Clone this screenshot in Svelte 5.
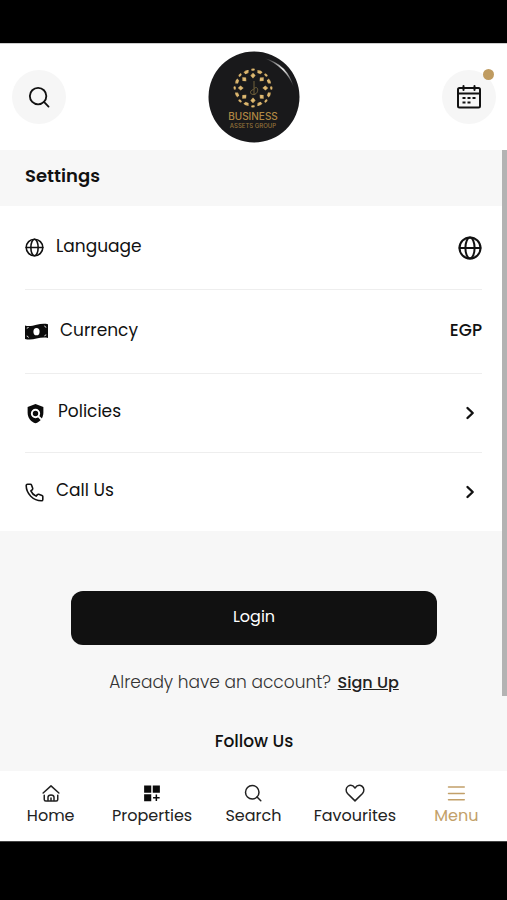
<script lang="ts">
	type Tab = { id: string; label: string };

	const tabs: Tab[] = [
		{ id: 'home', label: 'Home' },
		{ id: 'properties', label: 'Properties' },
		{ id: 'search', label: 'Search' },
		{ id: 'favourites', label: 'Favourites' },
		{ id: 'menu', label: 'Menu' }
	];

	const ring = Array.from({ length: 8 }, (_, i) => i * 45);

	let active = $state('menu');
</script>

{#snippet globe()}
	<svg class="icon" viewBox="0 0 24 24" aria-hidden="true">
		<circle cx="12" cy="12" r="10.5" />
		<ellipse cx="12" cy="12" rx="4.6" ry="10.5" />
		<path d="M1.5 12h21" />
	</svg>
{/snippet}

{#snippet magnifier()}
	<svg class="icon" viewBox="0 0 24 24" aria-hidden="true">
		<circle cx="11" cy="11" r="9" />
		<path d="M17.4 17.4L22.4 22.4" />
	</svg>
{/snippet}

{#snippet chevron()}
	<svg class="icon chevron" viewBox="0 0 24 24" aria-hidden="true">
		<path d="M9.5 7l5.2 5-5.2 5" />
	</svg>
{/snippet}

<div class="screen">
	<header class="top">
		<button class="round" type="button" aria-label="Search">
			{@render magnifier()}
		</button>

		<a class="brand" href="#home" aria-label="Business Assets Group">
			<svg viewBox="0 0 92 92" aria-hidden="true">
				<defs>
					<linearGradient id="gold" x1="0" y1="0" x2="1" y2="1">
						<stop offset="0" stop-color="#a37b3a" />
						<stop offset="0.5" stop-color="#e3c07a" />
						<stop offset="1" stop-color="#b0863f" />
					</linearGradient>
					<linearGradient id="shine" x1="0" y1="0" x2="1" y2="1">
						<stop offset="0" stop-color="#fff" stop-opacity="0" />
						<stop offset="0.5" stop-color="#fff" stop-opacity="0.9" />
						<stop offset="1" stop-color="#fff" stop-opacity="0" />
					</linearGradient>
				</defs>
				<circle cx="46" cy="46" r="45.5" fill="#19191b" />
				<path d="M56 7Q80 13 86 37Q78 16 56 7z" fill="url(#shine)" />
				<g fill="url(#gold)">
					{#each ring as angle}
						<g transform="rotate({angle} 45 37)">
							<rect x="43.2" y="17.6" width="3.6" height="2.2" rx="1" />
							<path d="M45 21.8l2.6 2.8-2.6 3-2.6-3z" />
						</g>
						<g transform="rotate({angle + 22.5} 45 37)">
							<path d="M42.2 18.8q2.8-1.4 5.6 0l-1.2 2.6h-3.2z" />
						</g>
					{/each}
				</g>
				<path
					d="M46 30v14M46 37.500c5-4 5 6-.5 6-4 0-4-4 0-5"
					fill="none"
					stroke="#7c6a40"
					stroke-width="0.9"
				/>
				<text class="brand-name" x="45" y="69" text-anchor="middle">BUSINESS</text>
				<text class="brand-sub" x="45" y="77" text-anchor="middle">ASSETS GROUP</text>
			</svg>
		</a>

		<button class="round calendar" type="button" aria-label="Bookings">
			<svg class="icon" viewBox="0 0 24 24" aria-hidden="true">
				<rect x="1" y="3" width="22" height="19.5" rx="1.5" />
				<path d="M1 8.5h22M6.5 1v4M17.5 1v4" />
				<path class="days" d="M5.500 13h3M10.500 13h3M15.500 13h3M5.500 17.500h3M10.500 17.500h3" />
			</svg>
			<span class="dot"></span>
		</button>
	</header>

	<main>
		<h1>Settings</h1>

		<ul class="rows">
			<li>
				<button class="row tall" type="button">
					<span class="glyph">{@render globe()}</span>
					<span class="label">Language</span>
					<span class="trail world">{@render globe()}</span>
				</button>
			</li>
			<li>
				<button class="row tall" type="button">
					<span class="glyph cash">
						<svg viewBox="0 0 24 18" aria-hidden="true">
							<path
								fill="#0b0b0b"
								d="M0 2.6C4 3.8 8 2.8 12 1.8 16 .8 20 .2 24 1.2V15.6C20 14.8 16 15.4 12 16.2 8 17.2 4 17.8 0 16.6z"
							/>
							<ellipse cx="12" cy="9" rx="3.2" ry="3.8" fill="#fff" />
							<path
								d="M1.8 5.4q1.6 .1 1.8-1.2M20.4 2.8q.2 1.5 1.8 1.7M1.8 13.6q1.6 .2 1.8 1.6M20.4 13.8q.2-1.4 1.8-1.4"
								fill="none"
								stroke="#fff"
								stroke-width="0.9"
							/>
						</svg>
					</span>
					<span class="label">Currency</span>
					<span class="trail code">EGP</span>
				</button>
			</li>
			<li>
				<a class="row" href="#policies">
					<span class="glyph shield">
						<svg viewBox="0 0 24 24" aria-hidden="true">
							<path fill="#0b0b0b" d="M12 1L21 4.6V11c0 5.6-3.8 10.6-9 12-5.2-1.4-9-6.4-9-12V4.6z" />
							<circle cx="12" cy="12" r="4.2" fill="none" stroke="#fff" stroke-width="2.2" />
							<path d="M15 15l5 5" stroke="#fff" stroke-width="2.2" />
						</svg>
					</span>
					<span class="label">Policies</span>
					<span class="trail">{@render chevron()}</span>
				</a>
			</li>
			<li>
				<a class="row" href="#call">
					<span class="glyph">
						<svg class="icon" viewBox="0 0 24 24" aria-hidden="true">
							<path
								d="M3.3 1.5h3.5c.7 0 1.2.4 1.4 1l1.5 4.2c.2.6 0 1.2-.4 1.6L7.4 10c1.2 2.9 3.6 5.3 6.6 6.6l1.7-1.9c.4-.4 1-.6 1.6-.4l4.200 1.500c.6.2 1 .8 1 1.400v3.500c0 1-.8 1.800-1.800 1.800C10.500 22.500 1.500 13.500 1.500 3.300c0-1 .8-1.800 1.800-1.800z"
							/>
						</svg>
					</span>
					<span class="label">Call Us</span>
					<span class="trail">{@render chevron()}</span>
				</a>
			</li>
		</ul>

		<section class="account">
			<button class="login" type="button">Login</button>
			<p>Already have an account? <a href="#signup">Sign Up</a></p>
			<h2>Follow Us</h2>
		</section>

		<span class="thumb"></span>
	</main>

	<nav class="tabs">
		{#each tabs as tab (tab.id)}
			<a href="#{tab.id}" class:active={active === tab.id} onclick={() => (active = tab.id)}>
				{#if tab.id === 'home'}
					<svg class="icon" viewBox="0 0 24 24" aria-hidden="true">
						<path d="M1.5 12L12 2.5 22.5 12M3 15v5.5q0 2 2 2h14q2 0 2-2V15" />
						<path d="M8 22v-4.5q0-3 4-3t4 3V22M12 18.5V22" />
					</svg>
				{:else if tab.id === 'properties'}
					<svg viewBox="0 0 24 24" aria-hidden="true">
						<path
							fill="#0b0b0b"
							d="M1.5 2h9.5v9.5H1.5zM13 2h9.5v9.5H13zM1.5 13.5h9.5V23H1.5zM16.8 14h2v3.4h3.4v2h-3.4v3.4h-2v-3.4h-3.4v-2h3.4z"
						/>
					</svg>
				{:else if tab.id === 'search'}
					{@render magnifier()}
				{:else if tab.id === 'favourites'}
					<svg class="icon heart" viewBox="0 0 26 24" aria-hidden="true">
						<path
							d="M13 22.5L3 12.6C.4 9.8 .6 5 3.6 3c3.2-2.1 7-1 9.4 2.4C15.4 2 19.2 .9 22.4 3c3 2 3.2 6.8 .6 9.6z"
						/>
					</svg>
				{:else}
					<svg class="icon" viewBox="0 0 24 24" aria-hidden="true">
						<path d="M2 4h21M2 12.5h21M2 21h21" />
					</svg>
				{/if}
				<span>{tab.label}</span>
			</a>
		{/each}
	</nav>
</div>

<style>
	:global(body) {
		margin: 0;
		background: #000;
	}

	.screen {
		min-height: 100vh;
		box-sizing: border-box;
		padding: 43px 0 59px;
		display: flex;
		flex-direction: column;
		background: #000;
		color: #111;
		font-family: Poppins, Inter, 'Open Sans', sans-serif;
		font-size: 17px;
		line-height: 24px;
	}

	button {
		border: 0;
		padding: 0;
		background: none;
		color: inherit;
		font: inherit;
		cursor: pointer;
	}

	a {
		color: inherit;
		text-decoration: none;
	}

	svg {
		display: block;
		overflow: visible;
	}

	.icon {
		fill: none;
		stroke: currentColor;
		stroke-width: 2;
		stroke-linecap: round;
		stroke-linejoin: round;
	}

	.top {
		display: flex;
		align-items: center;
		justify-content: space-between;
		padding: 7px 11px 7px 12px;
		border-top: 1px solid #ccc;
		background: #fff;
	}

	.round {
		position: relative;
		display: grid;
		place-items: center;
		width: 54px;
		height: 54px;
		border-radius: 50%;
		background: #f6f6f6;
	}

	.round .icon {
		width: 22px;
		height: 22px;
	}

	.round.calendar .icon {
		width: 24px;
		height: 24px;
	}

	.icon .days {
		stroke-linecap: butt;
	}

	.dot {
		position: absolute;
		top: -1px;
		right: 2px;
		width: 11px;
		height: 11px;
		border-radius: 50%;
		background: #bf9b60;
	}

	.brand svg {
		width: 92px;
		height: 92px;
	}

	.brand-name {
		fill: #b08843;
		font-family: Inter, sans-serif;
		font-size: 10px;
		font-weight: 500;
	}

	.brand-sub {
		fill: #94723a;
		font-family: Inter, sans-serif;
		font-size: 6px;
		font-weight: 500;
	}

	main {
		position: relative;
		flex: 1;
		background: #f7f7f7;
	}

	h1,
	h2 {
		margin: 0;
		font-weight: 500;
	}

	h1 {
		padding: 14px 25px 18px;
		font-size: 18px;
		font-weight: 600;
	}

	.rows {
		margin: 0;
		padding: 0 25px;
		background: #fff;
		list-style: none;
	}

	.rows li + li {
		border-top: 1px solid #eee;
	}

	.row {
		display: flex;
		align-items: center;
		gap: 12px;
		width: 100%;
		height: 78px;
		text-align: left;
	}

	.row.tall {
		height: 83px;
	}

	.glyph {
		width: 19px;
	}

	.glyph.cash {
		width: 23px;
	}

	.glyph.shield {
		width: 21px;
	}

	.label {
		padding-bottom: 4px;
	}

	.trail {
		display: grid;
		place-items: center;
		min-width: 24px;
		margin-left: auto;
	}

	.world .icon {
		width: 24px;
		height: 24px;
	}

	.chevron {
		width: 24px;
		height: 24px;
		stroke-width: 2.4;
	}

	.code {
		padding-bottom: 4px;
		font-weight: 500;
	}

	.account {
		padding: 60px 70px 18px 71px;
		text-align: center;
	}

	.login {
		display: block;
		width: 100%;
		height: 54px;
		padding-bottom: 2px;
		border-radius: 12px;
		background: #111;
		color: #fff;
		font-size: 16px;
	}

	.account p {
		margin: 25px 0 34px;
		color: #333;
		font-weight: 300;
		white-space: nowrap;
	}

	.account p a {
		margin-left: 2px;
		color: #222;
		font-size: 16px;
		font-weight: 500;
		text-decoration: underline;
	}

	h2 {
		font-size: 17px;
	}

	.thumb {
		position: absolute;
		top: 0;
		right: 0;
		width: 5px;
		height: 88%;
		background: #b3b3b3;
	}

	.tabs {
		display: grid;
		grid-template-columns: repeat(5, 1fr);
		padding: 13px 0;
		border-bottom: 1px solid #444;
		background: #fff;
		color: #222;
		font-size: 16px;
	}

	.tabs a {
		display: flex;
		flex-direction: column;
		align-items: center;
		gap: 2px;
	}

	.tabs svg {
		width: 18px;
		height: 18px;
	}

	.tabs svg.heart {
		width: 20px;
	}

	.tabs .active {
		color: #c2a069;
	}
</style>
